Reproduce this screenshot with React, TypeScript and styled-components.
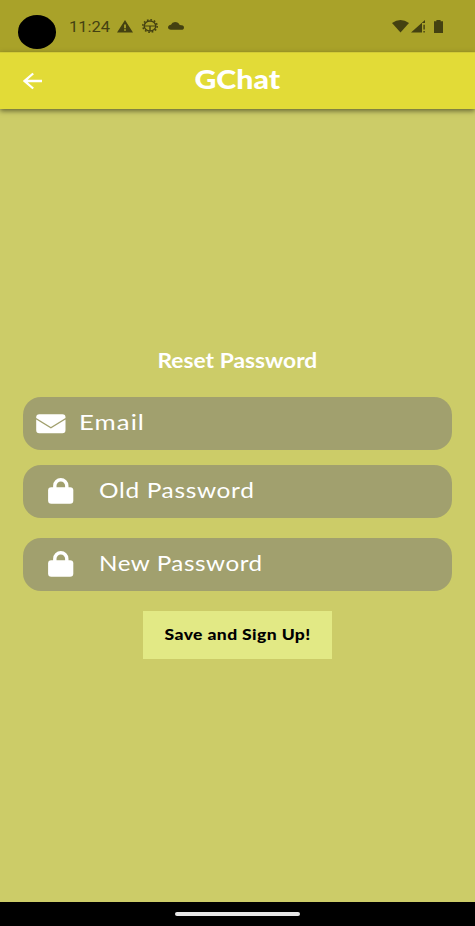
import React from "react";
import styled, { createGlobalStyle } from "styled-components";

const GlobalStyle = createGlobalStyle`
  * { box-sizing: border-box; }
  body { margin: 0; background: #cccc68; }
`;

const Screen = styled.div`
  width: 475px;
  height: 926px;
  display: flex;
  flex-direction: column;
  overflow: hidden;
  background: #cccc68;
  font-family: Lato, "Liberation Sans", sans-serif;
`;

const StatusBar = styled.header`
  height: 52px;
  flex: none;
  display: flex;
  align-items: flex-start;
  padding: 15px 32px 0 17.5px;
  background: #a9a229;
  color: #444111;
`;

const Camera = styled.div`
  width: 38.5px;
  height: 34px;
  border-radius: 50%;
  background: #000;
`;

const Clock = styled.div`
  width: 48px;
  margin: 4px 0 0 13px;
  font: 400 15px/17px Roboto, sans-serif;
  white-space: nowrap;
`;

const ClockText = styled.span`
  display: inline-block;
  transform: scaleX(1.1);
  transform-origin: left;
`;

const Icon = styled.svg<{ $left?: number; $top?: number }>`
  display: block;
  flex: none;
  margin-left: ${(p) => p.$left ?? 0}px;
  margin-top: ${(p) => p.$top ?? 0}px;
  fill: currentColor;
`;

const Spacer = styled.div`
  flex: 1;
`;

const AppBar = styled.div`
  position: relative;
  height: 57px;
  flex: none;
  display: grid;
  grid-template-columns: 60px 1fr 60px;
  align-items: start;
  background: #e2db37;
  border-top: 1px solid #d2cb36;
  color: #fff;
  box-shadow: 0 2px 5px rgba(0, 0, 0, 0.5);
`;

const BackButton = styled.button`
  border: 0;
  padding: 19px 0 0 23px;
  background: none;
  color: inherit;
`;

const Caption = styled.span<{ $size: number; $weight: number; $stretch: number; $spacing?: number; $origin?: string }>`
  display: inline-block;
  font-size: ${(p) => p.$size}px;
  font-weight: ${(p) => p.$weight};
  letter-spacing: ${(p) => p.$spacing ?? 0}px;
  line-height: 1.2;
  white-space: nowrap;
  transform: scaleX(${(p) => p.$stretch});
  transform-origin: ${(p) => p.$origin ?? "center"};
`;

const Title = styled.h1`
  margin: 7px 0 0;
  text-align: center;
  line-height: 34px;
`;

const Form = styled.main`
  flex: 1;
  display: flex;
  flex-direction: column;
  align-items: center;
  padding: 236px 23px 0;
`;

const Heading = styled.h2`
  height: 52px;
  margin: 0;
  color: #fff;
  line-height: 28px;
`;

const Field = styled.label<{ $gap: number; $inset: number; $iconWidth: number }>`
  width: 429px;
  height: 52.5px;
  flex: none;
  margin-bottom: ${(p) => p.$gap}px;
  padding-left: ${(p) => p.$inset}px;
  display: grid;
  grid-template-columns: ${(p) => p.$iconWidth}px 1fr;
  align-items: start;
  border-radius: 18px;
  background: #a1a06e;
  color: #fff;
`;

const Placeholder = styled.span`
  padding-top: 12px;
  line-height: 30px;
`;

const SaveButton = styled.button`
  width: 189px;
  height: 48px;
  border: 0;
  padding: 0 0 2px;
  background: #e2e985;
  color: #000;
  font-family: inherit;
`;

const NavigationBar = styled.footer`
  height: 24px;
  flex: none;
  display: flex;
  justify-content: center;
  padding-top: 10px;
  background: #000;
`;

const HomeHandle = styled.div`
  width: 125px;
  height: 4px;
  border-radius: 2px;
  background: #e8e8e8;
`;

const Lock = () => (
  <Icon width="26" height="26" viewBox="0 0 26 26" $top={13}>
    <path d="M6.8 10V7.8a6 6 0 0 1 12 0V10" fill="none" stroke="currentColor" strokeWidth="3.4" />
    <rect x="0.1" y="9.2" width="25.2" height="16.6" rx="3.2" />
  </Icon>
);

const Envelope = () => (
  <Icon width="30" height="20" viewBox="0 0 30 20" $top={17}>
    <path d="M.2 3.5Q.2.2 3.3.2H26.4Q29.5.2 29.5 3.5V4L14.9 13.1.2 4Z" />
    <path d="M.2 5.5 14.9 14.5 29.5 5.5V16Q29.5 19.3 26.4 19.3H3.3Q.2 19.3.2 16Z" />
  </Icon>
);

export default function App() {
  return (
    <>
      <GlobalStyle />
      <Screen>
        <StatusBar>
          <Camera />
          <Clock>
            <ClockText>11:24</ClockText>
          </Clock>
          <Icon width="16" height="13" viewBox="0 0 16 13" $top={5}>
            <path fillRule="evenodd" d="M8 0 16 12.5H0ZM7.1 4.4V8.2H8.9V4.4ZM7.1 9.2V10.8H8.9V9.2Z" />
          </Icon>
          <Icon width="16" height="14" viewBox="0 0 16 14" $left={9} $top={4}>
            <ellipse cx="8" cy="7" rx="7.2" ry="6.2" fill="none" stroke="currentColor" strokeWidth="1.5" strokeDasharray="1.7 1.8" />
            <ellipse cx="8" cy="7" rx="5.8" ry="5" fill="none" stroke="currentColor" strokeWidth="1.4" />
            <path d="M2.5 6.4H13.5V7.6H8.7V12H7.3V7.6H2.5Z" />
          </Icon>
          <Icon width="16" height="8" viewBox="0 0 16 8" $left={10} $top={7}>
            <path d="M3 7.8Q0 7.6 0 5.3 0 3.2 3 2.7 4 .2 7 .1 10.5.1 11.7 3.1 15.8 3.1 16 5.5 16 7.8 13.3 7.8Z" />
          </Icon>
          <Spacer />
          <Icon width="17" height="13" viewBox="0 0 17 13" $top={5}>
            <path d="M0 3Q8.5-3 17 3L8.5 12.5Z" />
          </Icon>
          <Icon width="15" height="13" viewBox="0 0 15 13" $left={2} $top={5}>
            <path d="M0 12.5 14 0V3H11V12.5ZM12.4 4.8H13.8V9.5H12.4ZM12.4 11H13.8V12.5H12.4Z" />
          </Icon>
          <Icon width="9" height="14" viewBox="0 0 9 14" $left={8} $top={5}>
            <path d="M2.4 0H6.6V1.2H9V13H0V1.2H2.4Z" />
          </Icon>
        </StatusBar>
        <AppBar>
          <BackButton aria-label="Back">
            <Icon width="20" height="18" viewBox="0 0 20 18">
              <path d="M19 9H2M10.2 1.5 1.6 9 10.2 16.5" fill="none" stroke="currentColor" strokeWidth="2.3" />
            </Icon>
          </BackButton>
          <Title>
            <Caption $size={27} $weight={900} $stretch={1.12}>GChat</Caption>
          </Title>
        </AppBar>
        <Form>
          <Heading>
            <Caption $size={21.5} $weight={700} $stretch={1.06}>Reset Password</Caption>
          </Heading>
          <Field $gap={15.5} $inset={13} $iconWidth={43}>
            <Envelope />
            <Placeholder>
              <Caption $size={22} $weight={400} $stretch={1.17} $spacing={0.9} $origin="left">Email</Caption>
            </Placeholder>
          </Field>
          <Field $gap={20.5} $inset={25} $iconWidth={50.5}>
            <Lock />
            <Placeholder>
              <Caption $size={22} $weight={400} $stretch={1.11} $spacing={0.6} $origin="left">Old Password</Caption>
            </Placeholder>
          </Field>
          <Field $gap={20.5} $inset={25} $iconWidth={50.5}>
            <Lock />
            <Placeholder>
              <Caption $size={22} $weight={400} $stretch={1.1} $spacing={0.5} $origin="left">New Password</Caption>
            </Placeholder>
          </Field>
          <SaveButton>
            <Caption $size={15.5} $weight={900} $stretch={1.13} $spacing={0.35}>Save and Sign Up!</Caption>
          </SaveButton>
        </Form>
        <NavigationBar>
          <HomeHandle />
        </NavigationBar>
      </Screen>
    </>
  );
}
